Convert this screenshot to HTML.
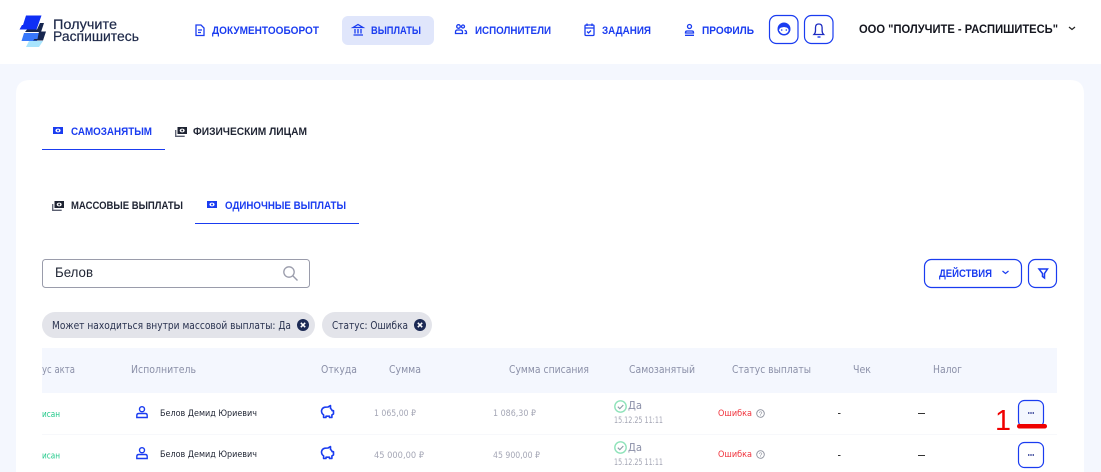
<!DOCTYPE html>
<html lang="ru"><head><meta charset="utf-8"><title>Выплаты</title>
<style>
html,body{margin:0;padding:0;background:#f4f7fe;width:1101px;height:472px;overflow:hidden}
svg{display:block}
text{font-family:"Liberation Sans",sans-serif}
.nav{font-size:11px;font-weight:700;fill:#1a3cf0}
.tab{font-size:11px;font-weight:700;fill:#1f2433}
.tabA{font-size:11px;font-weight:700;fill:#1a3cf0}
.th,.da{font-family:"DejaVu Sans",sans-serif;font-size:10.5px;fill:#8b90a8}
.nm{font-family:"DejaVu Sans",sans-serif;font-size:8.5px;fill:#1f2433}
.am,.dt{font-family:"DejaVu Sans",sans-serif;font-size:8.5px;fill:#a4a6b5}
.gr{font-family:"DejaVu Sans",sans-serif;font-size:8.500px;fill:#22c98a}
.err{font-family:"DejaVu Sans",sans-serif;font-size:8.500px;fill:#f0323c}
.chip{font-family:"DejaVu Sans",sans-serif;font-size:10.500px;fill:#2a3350}
.ic{fill:none;stroke:#1a3cf0;stroke-width:1.3}
</style></head><body>
<svg width="1101" height="472" viewBox="0 0 1101 472" xmlns="http://www.w3.org/2000/svg">
<defs>
<g id="cash1"><rect x="0" y="0" width="10" height="7" fill="#1a3cf0"/><ellipse cx="5" cy="3.500" rx="2.600" ry="1.900" fill="#fff"/><circle cx="5" cy="3.500" r="1" fill="#1a3cf0"/></g>
<g id="cash2"><rect x="2.500" y="0" width="9.500" height="7" fill="#1f2433"/><ellipse cx="7.200" cy="3.500" rx="2.500" ry="1.900" fill="#fff"/><circle cx="7.200" cy="3.500" r="1" fill="#1f2433"/><path d="M.7 3v6.300h9" fill="none" stroke="#5a5f70" stroke-width="1.300"/></g>
<g id="person"><circle cx="6" cy="3.200" r="2.500" fill="none" stroke="#1a3cf0" stroke-width="1.400"/><path d="M.8 11.500v-2q0-2 2-2h6.400q2 0 2 2v2z" fill="none" stroke="#1a3cf0" stroke-width="1.400"/></g>
<g id="pig"><path d="M1.500 5.800q.5-3 3.500-3.600l3-.2 2.500-1.400v2.800q1.200 1 1.700 2.300h1.300v3.200l-1.600 1v2.600h-2.400v-1.300h-3.500v1.300h-2.400v-2.600q-2.200-1.600-2.100-4.100z" fill="none" stroke="#1a3cf0" stroke-width="1.600" stroke-linejoin="round"/></g>
<g id="x"><circle cx="6" cy="6" r="6" fill="#1c2a55"/><path d="M3.800 3.800l4.400 4.400M8.200 3.800l-4.400 4.400" stroke="#fff" stroke-width="1.500"/></g>
<g id="ok"><circle cx="6.500" cy="6.500" r="5.700" fill="none" stroke="#8fe3ba" stroke-width="1.400"/><path d="M3.800 6.700l2 2 3.500-3.700" fill="none" stroke="#8a9aa5" stroke-width="1.100"/></g>
<g id="q"><circle cx="4.500" cy="4.500" r="3.800" fill="none" stroke="#8b8f9c" stroke-width=".9"/><text x="4.500" y="6.800" font-size="6.500" text-anchor="middle" fill="#8b8f9c">?</text></g>
</defs>

<rect width="1101" height="472" fill="#f4f7fe"/>
<rect width="1101" height="64" fill="#fff"/>
<path d="M16 472V94q0-14 14-14H1070q14 0 14 14V472z" fill="#fff"/>

<!-- logo -->
<path d="M29 41h14l-4 6H26z" fill="#a8e4fd"/>
<path d="M24 33h16l-3 8H21.500z" fill="#3878fb"/>
<path d="M39 31.500h7l-3 9H33l1.500-1.500h3z" fill="#16264f"/>
<path d="M27 29.500h10l3-6.500h4l-3 9H25z" fill="#16264f"/>
<path d="M26 15.500h15.500l-5 14H19.500l2.500-4.500h1z" fill="#0f2ff5"/>
<text x="53" y="29" font-size="13.500" fill="#1f2a4a" stroke="#1f2a4a" stroke-width=".2" textLength="64" lengthAdjust="spacingAndGlyphs">Получите</text>
<text x="53" y="41" font-size="13.500" fill="#1f2a4a" stroke="#1f2a4a" stroke-width=".2" textLength="86" lengthAdjust="spacingAndGlyphs">Распишитесь</text>

<!-- nav -->
<path d="M196 25h5l3 3v7.500h-8z" class="ic"/><path d="M198 30h4M198 32.500h3" class="ic" stroke-width="1"/>
<text x="212" y="34" class="nav" textLength="107" lengthAdjust="spacingAndGlyphs">ДОКУМЕНТООБОРОТ</text>
<rect x="342" y="16" width="92" height="29" rx="6" fill="#e0e6fb"/>
<path d="M353 27.500l5-3 5 3zM353.500 35h9.500M355 29v4.500M358 29v4.500M361 29v4.500" class="ic"/>
<text x="371" y="34" class="nav" textLength="50" lengthAdjust="spacingAndGlyphs">ВЫПЛАТЫ</text>
<circle cx="458.500" cy="26.500" r="1.800" class="ic"/><circle cx="463" cy="26.500" r="1.500" class="ic"/><path d="M455.500 33.500v-1.500q0-2 2-2h3q2 0 2 2v1.500zM464.500 30.500q2 0 2 2v1h-2" class="ic"/>
<text x="475" y="34" class="nav" textLength="76" lengthAdjust="spacingAndGlyphs">ИСПОЛНИТЕЛИ</text>
<rect x="585" y="25" width="9" height="10.500" rx="1" class="ic"/><path d="M585 28h9M587 23.500v2.500M592 23.500v2.500M587 31.500l1.500 1.500 2.500-2.500" class="ic" stroke-width="1"/>
<text x="602" y="34" class="nav" textLength="49" lengthAdjust="spacingAndGlyphs">ЗАДАНИЯ</text>
<circle cx="689.500" cy="26.500" r="2" class="ic" stroke-width="1.100"/><path d="M685.500 33v-.5q0-1.500 1.500-1.500h5q1.500 0 1.500 1.500v.5zM685 35.300h9" class="ic" stroke-width="1.100"/>
<text x="702" y="34" class="nav" textLength="52" lengthAdjust="spacingAndGlyphs">ПРОФИЛЬ</text>
<rect x="769.500" y="15.500" width="28.500" height="28" rx="7" fill="#fff" stroke="#1a3cf0" stroke-width="1.200"/>
<circle cx="784" cy="29" r="6.500" fill="#1a3cf0"/><path d="M779 31q0-3 2.500-3.500l2.500-.5 2.500.5q2.500 1 2 3.500-1.500 3-4.500 3t-4.500-3z" fill="#fff"/><circle cx="781.700" cy="30" r=".8" fill="#1a3cf0"/><circle cx="786.300" cy="30" r=".8" fill="#1a3cf0"/>
<rect x="804.500" y="15.500" width="28.500" height="28" rx="7" fill="#fff" stroke="#1a3cf0" stroke-width="1.200"/>
<path d="M814 34.500q1.500-1.500 1.500-4v-3q0-3.500 3.300-3.500t3.300 3.500v3q0 2.500 1.500 4z" fill="none" stroke="#1c2ac0" stroke-width="1.300"/><path d="M817.500 37h3" stroke="#1a3cf0" stroke-width="1.400"/>
<text x="859" y="33" font-size="12" font-weight="700" fill="#14161f" textLength="199" lengthAdjust="spacingAndGlyphs">ООО "ПОЛУЧИТЕ - РАСПИШИТЕСЬ"</text>
<path d="M1069 27l3 2.500 3-2.500" fill="none" stroke="#222" stroke-width="1.200"/>

<!-- tabs -->
<use href="#cash1" x="53" y="127"/>
<text x="71" y="135" class="tabA" textLength="81" lengthAdjust="spacingAndGlyphs">САМОЗАНЯТЫМ</text>
<rect x="42" y="149" width="123" height="1" fill="#1a3cf0"/>
<use href="#cash2" x="175" y="127"/>
<text x="193" y="135" class="tab" textLength="114" lengthAdjust="spacingAndGlyphs">ФИЗИЧЕСКИМ ЛИЦАМ</text>
<use href="#cash2" x="52" y="201"/>
<text x="71" y="209" class="tab" textLength="112" lengthAdjust="spacingAndGlyphs">МАССОВЫЕ ВЫПЛАТЫ</text>
<use href="#cash1" x="207" y="201"/>
<text x="225" y="209" class="tabA" textLength="121" lengthAdjust="spacingAndGlyphs">ОДИНОЧНЫЕ ВЫПЛАТЫ</text>
<rect x="195" y="223" width="164" height="1" fill="#1a3cf0"/>

<!-- search -->
<rect x="42.500" y="259.500" width="267" height="28" rx="3" fill="#fff" stroke="#9a9cab"/>
<text x="55" y="277" font-size="14" fill="#1f2433" textLength="38" lengthAdjust="spacingAndGlyphs">Белов</text>
<circle cx="289" cy="272" r="5.200" fill="none" stroke="#9a9cab" stroke-width="1.300"/><path d="M293 276l4.500 4.500" stroke="#9a9cab" stroke-width="1.400"/>

<!-- actions -->
<rect x="924.500" y="259.500" width="97" height="28" rx="7" fill="#fff" stroke="#1a3cf0" stroke-width="1.200"/>
<text x="939" y="277" class="nav" textLength="53" lengthAdjust="spacingAndGlyphs">ДЕЙСТВИЯ</text>
<path d="M1002.500 271l3 2.500 3-2.500" fill="none" stroke="#1a3cf0" stroke-width="1.200"/>
<rect x="1028.500" y="259.500" width="28" height="28" rx="7" fill="#fff" stroke="#1a3cf0" stroke-width="1.200"/>
<path d="M1039 269h8.500l-3 4.500v4.500l-2-1.500v-3z" fill="none" stroke="#1a3cf0" stroke-width="1.500"/>

<!-- chips -->
<rect x="42" y="312" width="273" height="26" rx="13" fill="#e3e4ea"/>
<text x="52" y="329" class="chip" textLength="239" lengthAdjust="spacingAndGlyphs">Может находиться внутри массовой выплаты: Да</text>
<use href="#x" x="297" y="319"/>
<rect x="322" y="312" width="110" height="26" rx="13" fill="#e3e4ea"/>
<text x="332" y="329" class="chip" textLength="76" lengthAdjust="spacingAndGlyphs">Статус: Ошибка</text>
<use href="#x" x="414" y="319"/>

<!-- table head -->
<rect x="42" y="348" width="1015" height="45" fill="#f4f7fe"/>
<text x="42" y="373" class="th" textLength="33" lengthAdjust="spacingAndGlyphs">ус акта</text>
<text x="131" y="373" class="th" textLength="65" lengthAdjust="spacingAndGlyphs">Исполнитель</text>
<text x="321" y="373" class="th" textLength="36" lengthAdjust="spacingAndGlyphs">Откуда</text>
<text x="389" y="373" class="th" textLength="32" lengthAdjust="spacingAndGlyphs">Сумма</text>
<text x="509" y="373" class="th" textLength="80" lengthAdjust="spacingAndGlyphs">Сумма списания</text>
<text x="629" y="373" class="th" textLength="66" lengthAdjust="spacingAndGlyphs">Самозанятый</text>
<text x="732" y="373" class="th" textLength="79" lengthAdjust="spacingAndGlyphs">Статус выплаты</text>
<text x="853" y="373" class="th" textLength="18" lengthAdjust="spacingAndGlyphs">Чек</text>
<text x="933" y="373" class="th" textLength="29" lengthAdjust="spacingAndGlyphs">Налог</text>

<!-- row 1 -->
<rect x="42" y="434" width="1015" height="1" fill="#f7f8fb"/>
<text x="42" y="417" class="gr" textLength="18" lengthAdjust="spacingAndGlyphs">исан</text>
<use href="#person" x="136" y="406"/>
<text x="160" y="416" class="nm" textLength="97" lengthAdjust="spacingAndGlyphs">Белов Демид Юриевич</text>
<use href="#pig" x="320" y="405"/>
<text x="374" y="416" class="am" textLength="42" lengthAdjust="spacingAndGlyphs">1 065,00 ₽</text>
<text x="493" y="416" class="am" textLength="43" lengthAdjust="spacingAndGlyphs">1 086,30 ₽</text>
<use href="#ok" x="614" y="400"/>
<text x="628" y="409" class="da" textLength="14" lengthAdjust="spacingAndGlyphs">Да</text>
<text x="614" y="423" class="dt" textLength="49" lengthAdjust="spacingAndGlyphs">15.12.25 11:11</text>
<text x="718" y="416" class="err" textLength="34" lengthAdjust="spacingAndGlyphs">Ошибка</text>
<use href="#q" x="756" y="409"/>
<rect x="838" y="413" width="2.500" height="1" fill="#333"/>
<rect x="918" y="413" width="7" height="1" fill="#333"/>
<rect x="1018.500" y="400.500" width="25" height="26.500" rx="6" fill="#f4f7fe" stroke="#1a3cf0" stroke-width="1.200"/>
<path d="M1028 413h1.400M1030.300 413h1.400M1032.600 413h1.400" stroke="#1c2a8a" stroke-width="1.500"/>
<text x="995" y="430" font-size="29" fill="#f00000" textLength="16" lengthAdjust="spacingAndGlyphs">1</text>
<rect x="1017" y="424" width="30" height="4.500" rx="2.200" fill="#ee0000"/>

<!-- row 2 -->
<text x="42" y="458.500" class="gr" textLength="18" lengthAdjust="spacingAndGlyphs">исан</text>
<use href="#person" x="136" y="447"/>
<text x="160" y="457" class="nm" textLength="97" lengthAdjust="spacingAndGlyphs">Белов Демид Юриевич</text>
<use href="#pig" x="320" y="446"/>
<text x="374" y="458" class="am" textLength="50" lengthAdjust="spacingAndGlyphs">45 000,00 ₽</text>
<text x="493" y="458" class="am" textLength="47" lengthAdjust="spacingAndGlyphs">45 900,00 ₽</text>
<use href="#ok" x="614" y="441"/>
<text x="628" y="451" class="da" textLength="14" lengthAdjust="spacingAndGlyphs">Да</text>
<text x="614" y="465" class="dt" textLength="49" lengthAdjust="spacingAndGlyphs">15.12.25 11:11</text>
<text x="718" y="457" class="err" textLength="34" lengthAdjust="spacingAndGlyphs">Ошибка</text>
<use href="#q" x="756" y="450"/>
<rect x="838" y="455" width="2.500" height="1" fill="#333"/>
<rect x="918" y="455" width="7" height="1" fill="#333"/>
<rect x="1018.500" y="442.500" width="25" height="25" rx="6" fill="#fff" stroke="#1a3cf0" stroke-width="1.200"/>
<path d="M1028 455h1.400M1030.300 455h1.400M1032.600 455h1.400" stroke="#1c2a8a" stroke-width="1.500"/>
</svg>
</body></html>
